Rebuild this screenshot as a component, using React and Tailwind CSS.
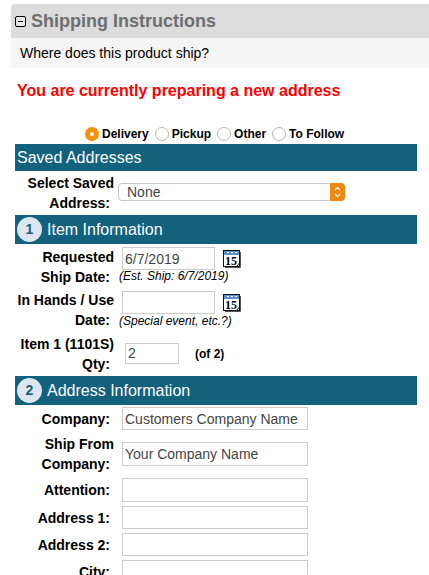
import { ChevronUp, ChevronDown } from 'lucide-react';

function CalendarIcon() {
  return (
    <svg width="20" height="20" viewBox="0 0 20 20" className="shrink-0">
      <rect x="1.5" y="1.5" width="16" height="16" fill="#fff" stroke="#111" />
      <rect x="2" y="2" width="15" height="4" fill="#5f8fd0" />
      <path d="M5 3.5h2M9 3.5h2M13 3.5h2" stroke="#fff" strokeWidth="1" />
      <path d="M18.5 3v15.5H3" fill="none" stroke="#555" strokeWidth="1" />
      <text x="3" y="15.5" fontSize="12" fontWeight="700" fontFamily="Liberation Serif, serif" fill="#000">15</text>
      <path d="M17.5 14l-3 3.5" stroke="#111" strokeWidth="1" />
    </svg>
  );
}

function Radio({ checked, label }) {
  return (
    <span className="flex items-center gap-[3px]">
      {checked ? (
        <span className="flex h-[14px] w-[14px] items-center justify-center rounded-full bg-[#f0930f]">
          <span className="h-[4px] w-[4px] rounded-full bg-white" />
        </span>
      ) : (
        <span className="h-[14px] w-[14px] rounded-full border border-[#b5b5b5] bg-white" />
      )}
      <span>{label}</span>
    </span>
  );
}

function SectionBar({ num, title }) {
  return (
    <div className="flex h-[29px] items-center gap-[5px] bg-[#12627d] pl-[2px] text-[16px] text-white">
      <span className="flex h-[25px] w-[25px] items-center justify-center rounded-full bg-[#dce6f1] text-[14px] font-bold text-[#12627d]">
        {num}
      </span>
      <span>{title}</span>
    </div>
  );
}

function Label({ lines }) {
  return (
    <div className="w-[99px] shrink-0 text-right text-[14px] leading-[20px] font-bold text-black">
      {lines.map((line, i) => (
        <div key={i} className={i === lines.length - 1 ? 'pr-[4px]' : ''}>{line}</div>
      ))}
    </div>
  );
}

function TextInput({ value, className = 'h-[23px] w-[186px]' }) {
  return (
    <input
      defaultValue={value}
      className={`border border-[#cccccc] bg-white px-[2px] text-[14px] text-[#444] outline-none ${className}`}
    />
  );
}

function AddressRow({ lines, value, className, inputClass }) {
  return (
    <div className={`flex items-center gap-[8px] ${className}`}>
      <Label lines={lines} />
      <TextInput value={value} className={inputClass} />
    </div>
  );
}

export default function App() {
  return (
    <div className="h-[575px] overflow-hidden bg-white pt-[4px] pl-[11px] font-['Liberation_Sans',Arial,sans-serif]">
      {/* HEADER */}
      <div className="flex h-[34px] items-center gap-[5px] rounded-tl-[4px] bg-[#dcdcdc] pl-[4px]">
        <span className="flex h-[11px] w-[11px] items-center justify-center rounded-[2px] border border-black bg-white/30">
          <span className="h-px w-[5px] bg-black" />
        </span>
        <span className="text-[18px] font-bold text-[#6d6e70]">Shipping Instructions</span>
      </div>
      <div className="flex h-[30px] items-center bg-[#f5f5f5] pl-[9px] text-[14px] text-black">
        Where does this product ship?
      </div>

      <div className="mt-[13px] pl-[6px] text-[16px] leading-[20px] font-bold text-[#ff0000]">
        You are currently preparing a new address
      </div>

      <div className="ml-[4px] w-[402px]">
        {/* SHIP TYPE */}
        <div className="mt-[23px] flex h-[20px] items-center gap-[6px] pl-[70px] text-[12px] font-bold text-black">
          <Radio checked label="Delivery" />
          <Radio label="Pickup" />
          <Radio label="Other" />
          <Radio label="To Follow" />
        </div>

        {/* SAVED ADDRESSES */}
        <div className="flex h-[27px] items-center bg-[#12627d] pl-[2px] text-[16px] text-white">Saved Addresses</div>
        <div className="flex h-[44px] gap-[4px] pt-[2px]">
          <Label lines={['Select Saved', 'Address:']} />
          <div className="mt-[10px] flex h-[18px] w-[227px] items-center justify-between rounded-[4px] border border-[#c8c8c8] bg-white text-[14px] text-[#444]">
            <span className="pl-[8px]">None</span>
            <span className="-mr-px flex h-[18px] w-[15px] flex-col items-center justify-center rounded-r-[4px] bg-[#f0890f] text-white">
              <ChevronUp size={9} strokeWidth={3} className="-mb-[1px]" />
              <ChevronDown size={9} strokeWidth={3} className="-mt-[1px]" />
            </span>
          </div>
        </div>

        {/* ITEM INFORMATION */}
        <SectionBar num="1" title="Item Information" />
        <div className="flex h-[46px] gap-[8px] pt-[3px]">
          <Label lines={['Requested', 'Ship Date:']} />
          <div>
            <div className="flex items-center gap-[7px]">
              <TextInput value="6/7/2019" className="h-[23px] w-[93px]" />
              <CalendarIcon />
            </div>
            <div className="-ml-[3px] -mt-[3px] text-[12px] leading-[18px] text-black italic">(Est. Ship: 6/7/2019)</div>
          </div>
        </div>
        <div className="flex h-[44px] gap-[8px]">
          <Label lines={['In Hands / Use', 'Date:']} />
          <div className="pt-[1px]">
            <div className="flex items-center gap-[7px]">
              <TextInput className="h-[23px] w-[93px]" />
              <CalendarIcon />
            </div>
            <div className="-ml-[3px] -mt-[2px] text-[12px] leading-[18px] text-black italic">(Special event, etc.?)</div>
          </div>
        </div>
        <div className="flex h-[42px] gap-[8px]">
          <Label lines={['Item 1 (1101S)', 'Qty:']} />
          <div className="mt-[9px] flex h-[21px] items-center gap-[16px] pl-[3px]">
            <TextInput value="2" className="h-[21px] w-[54px]" />
            <span className="text-[12px] font-bold text-black">(of 2)</span>
          </div>
        </div>

        {/* ADDRESS INFORMATION */}
        <SectionBar num="2" title="Address Information" />
        <AddressRow lines={['Company:']} value="Customers Company Name" className="mt-[2px] h-[23px]" inputClass="h-[23px] w-[186px]" />
        <div className="mt-[2px] flex h-[46px] gap-[8px] pt-[2px]">
          <Label lines={['Ship From', 'Company:']} />
          <TextInput value="Your Company Name" className="mt-[8px] h-[24px] w-[186px]" />
        </div>
        <AddressRow lines={['Attention:']} className="h-[24px]" inputClass="h-[24px] w-[186px]" />
        <AddressRow lines={['Address 1:']} className="mt-[4px] h-[23px]" inputClass="h-[23px] w-[186px]" />
        <AddressRow lines={['Address 2:']} className="mt-[4px] h-[23px]" inputClass="h-[23px] w-[186px]" />
        <AddressRow lines={['City:']} className="mt-[4px] h-[23px]" inputClass="h-[23px] w-[186px]" />
      </div>
    </div>
  );
}
